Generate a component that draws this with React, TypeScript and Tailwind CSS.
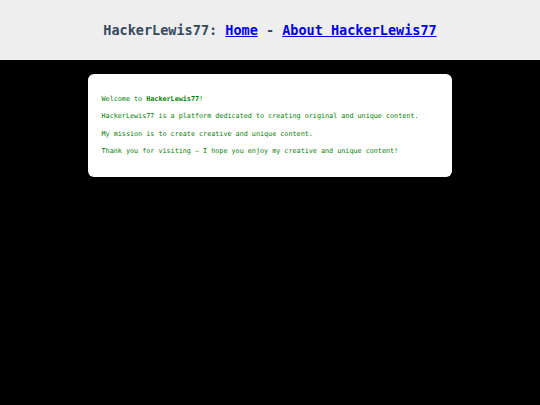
export default function App() {
  return (
    <div className="min-h-[405px] bg-black font-['DejaVu_Sans_Mono',monospace]">
      <header className="flex h-[60px] items-center justify-center bg-[#eeeeee]">
        <h1 className="text-[13.5px] font-bold text-[#34495e]">
          HackerLewis77:{" "}
          <a href="#" className="text-[#0000ee] underline">
            Home
          </a>{" "}
          -{" "}
          <a href="#" className="text-[#0000ee] underline">
            About HackerLewis77
          </a>
        </h1>
      </header>
      <main className="mx-auto mt-[13.5px] w-[364px] rounded-[6px] bg-white px-[13.5px] py-[13.5px] text-[6.75px] leading-[10.8px] text-[#008000]">
        <p className="my-[6.75px]">
          Welcome to <strong className="font-bold">HackerLewis77</strong>!
        </p>
        <p className="my-[6.75px]">
          HackerLewis77 is a platform dedicated to creating original and unique content.
        </p>
        <p className="my-[6.75px]">My mission is to create creative and unique content.</p>
        <p className="my-[6.75px]">
          Thank you for visiting – I hope you enjoy my creative and unique content!
        </p>
      </main>
    </div>
  );
}
